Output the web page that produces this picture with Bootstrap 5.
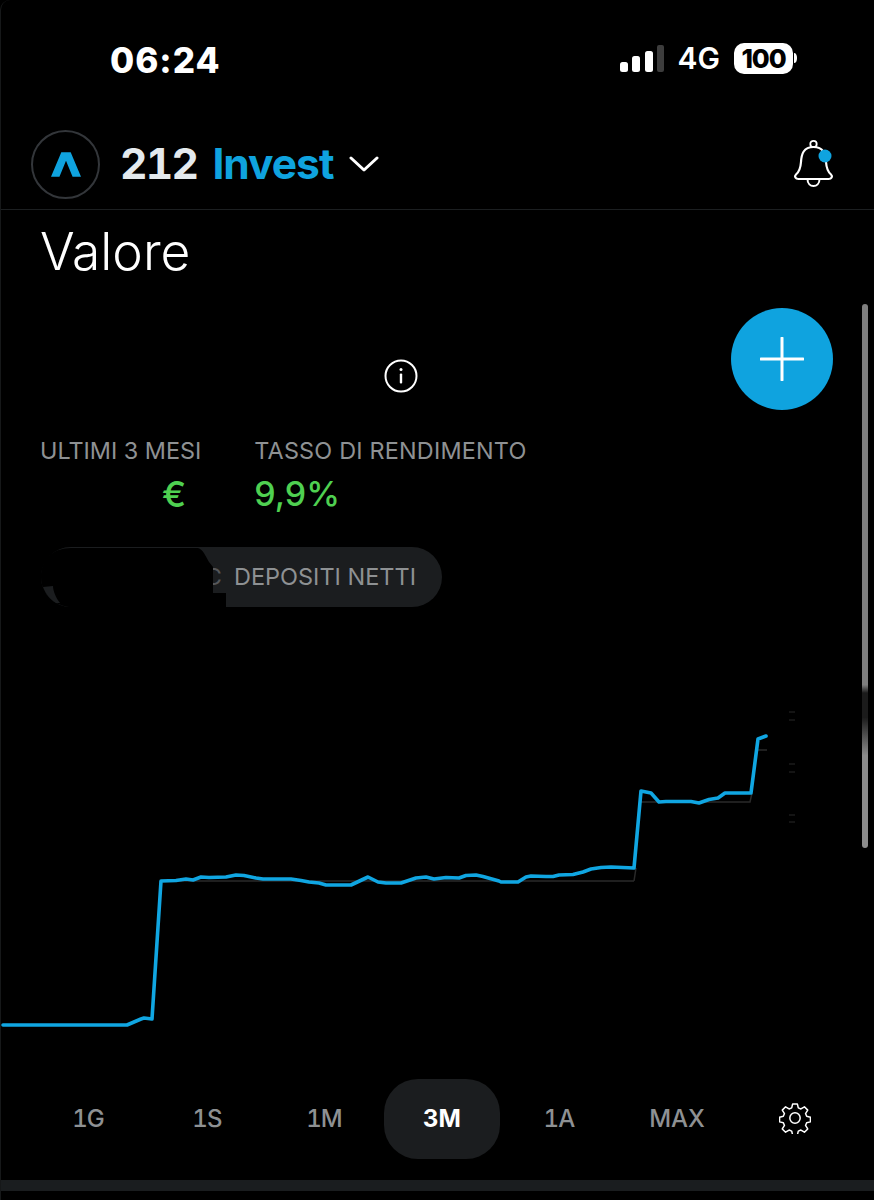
<!DOCTYPE html>
<html lang="it">
<head>
<meta charset="utf-8">
<title>212 Invest</title>
<link href="https://cdn.jsdelivr.net/npm/bootstrap@5.3.0/dist/css/bootstrap.min.css" rel="stylesheet">
<style>
html,body{background:#000;margin:0;}
body{font-family:Inter,"Liberation Sans",sans-serif;color:#fff;}
.screen{width:874px;height:1200px;background:#000;position:relative;overflow:hidden;border-left:1px solid #161819;border-radius:10px 10px 0 0;}
.status-row{height:125px;padding:39px 76px 0 109px;}
.clock{font-size:35px;font-weight:800;line-height:42px;letter-spacing:1px;}
.status-right{gap:15px;margin-top:-2px;}
.net{font-size:30px;font-weight:600;line-height:42px;margin-left:-1px;margin-right:-1px;}
.batt{width:59px;height:31px;border-radius:10px;background:#fff;color:#000;font-size:26px;font-weight:800;line-height:31px;text-align:center;letter-spacing:-1.2px;}
.app-head{height:85px;border-bottom:1px solid #1c1f21;padding:0 38px 6px 30px;}
.logo-ring{width:69px;height:69px;border:2px solid #33363a;border-radius:50%;}
.brand{font-size:42.5px;font-weight:700;line-height:50px;margin-left:20px;}
.brand-num{color:#e4eaee;font-feature-settings:"tnum";letter-spacing:-1.7px;}
.brand-name{color:#0fa3df;letter-spacing:-1px;margin-left:5px;}
.chev{margin-left:16px;}
.val-title{font-size:51.5px;font-weight:300;line-height:60px;margin:11px 0 0 39px;}
.blur-row{height:64px;margin-top:63px;padding:0 40px;}
.info-gap{margin-left:343px;}
.add-btn{width:102px;height:102px;border-radius:50%;background:#0fa3df;position:absolute;left:730px;top:308px;}
.metric-row{margin:0 0 0 39px;gap:53px;padding-top:28px;}
.m-label{font-size:23.4px;line-height:30px;color:#8e9193;white-space:nowrap;}
.m-label-wide{letter-spacing:.2px;}
.m-value{font-size:34px;font-weight:450;line-height:42px;color:#4fd051;margin-top:7px;}
.m-euro{font-size:36px;font-weight:500;padding-right:15px;}
.pill{width:401px;height:60px;background:#1b1d1f;border-radius:30px;margin:32px 0 0 40px;padding-right:26px;position:relative;}
.pill-text{font-size:23.5px;color:#8e9193;white-space:nowrap;}
.pill-ghost{color:#55575a;margin-right:12px;}
.blot{position:absolute;left:0;top:0;}
.chart{display:block;margin-top:53px;}
.ranges{position:absolute;left:0;top:1079px;width:873px;height:80px;}
.rng{position:absolute;top:0;height:80px;font-size:24px;font-weight:500;color:#8e9193;background:transparent;border:0;padding:0;font-feature-settings:"tnum";}
.rng-num{letter-spacing:-.9px;}
.rng-on{background:#1b1d1f;color:#fff;border-radius:34px;font-weight:700;}
.gear{position:absolute;left:778px;top:23px;}
.home-bar{position:absolute;left:0;top:1180px;width:873px;height:11px;background:#1a1d1f;}
.scroll-thumb{position:absolute;left:861px;top:304px;width:6px;height:544px;border-radius:3px;background:linear-gradient(#7f7f7f 0,#7f7f7f 70%,#1b1b1b 71.5%,#1b1b1b 76%,#8c8c8c 83%,#8c8c8c 100%);}
</style>
</head>
<body>
<div class="screen">
  <div class="status-row d-flex justify-content-between align-items-start">
    <div class="clock">06:24</div>
    <div class="status-right d-flex align-items-center">
      <svg width="44" height="27" viewBox="0 0 44 27"><rect x="0" y="17" width="8" height="10" rx="2.500" fill="#fff"/><rect x="12" y="11" width="8" height="16" rx="2.500" fill="#fff"/><rect x="25" y="6" width="8" height="21" rx="2.500" fill="#fff"/><rect x="37" y="0" width="7" height="27" rx="2" fill="#3d3d3d"/></svg>
      <span class="net">4G</span>
      <div class="d-flex align-items-center">
        <div class="batt">100</div>
        <svg width="5" height="12" viewBox="0 0 5 12"><path d="M1 1c2 0 3 2 3 5s-1 5-3 5z" fill="#fff"/></svg>
      </div>
    </div>
  </div>
  <div class="app-head d-flex align-items-center justify-content-between">
    <div class="d-flex align-items-center">
      <div class="logo-ring d-flex align-items-center justify-content-center">
        <svg width="30" height="25" viewBox="0 0 32 26"><path d="M11 0h10l11 26h-9L16 9 9 26H0z" fill="#0fa3df"/></svg>
      </div>
      <div class="brand"><span class="brand-num">212</span> <span class="brand-name">Invest</span></div>
      <svg class="chev" width="30" height="18" viewBox="0 0 30 18"><path d="M2 3l13 12L28 3" fill="none" stroke="#fff" stroke-width="3" stroke-linecap="round" stroke-linejoin="round"/></svg>
    </div>
    <svg width="44" height="50" viewBox="0 0 44 50"><g transform="translate(1.500,0)"><circle cx="20" cy="5" r="3.200" fill="none" stroke="#fff" stroke-width="1.800"/><path d="M20 8C10 8 8 15 7.500 23c-.5 7-2 10-5 12.500C.5 37.500 2 40 5 40h30c3 0 4.500-2.500 2.500-4.500-3-2.500-4.500-5.500-5-12.500C32 15 30 8 20 8z" fill="none" stroke="#fff" stroke-width="2.200"/><path d="M14 40c0 5 3 7 6 7s6-2 6-7" fill="none" stroke="#fff" stroke-width="2"/></g><circle cx="33" cy="17" r="6.500" fill="#0fa3df"/></svg>
  </div>
  <div class="val-title">Valore</div>
  <div class="blur-row d-flex align-items-center">
    <svg class="info-gap" width="34" height="34" viewBox="0 0 34 34"><circle cx="17" cy="17" r="15.500" fill="none" stroke="#fff" stroke-width="2"/><circle cx="17" cy="10.500" r="1.500" fill="#fff"/><rect x="15.800" y="14.500" width="2.400" height="10" rx="1" fill="#fff"/></svg>
  </div>
  <div class="metric-row d-flex">
    <div>
      <div class="m-label">ULTIMI 3 MESI</div>
      <div class="m-value m-euro text-end">€</div>
    </div>
    <div>
      <div class="m-label m-label-wide">TASSO DI RENDIMENTO</div>
      <div class="m-value">9,9%</div>
    </div>
  </div>
  <div class="pill d-flex align-items-center justify-content-end">
    <span class="pill-text pill-ghost">C</span><span class="pill-text">DEPOSITI NETTI</span>
    <svg class="blot" width="190" height="60" viewBox="0 0 190 60"><path d="M0 30C0 12 12 1 30 1H157C162 2 165 10 168 15L172 20V46H185V60H28C12 58 0 46 0 30z" fill="#000"/><path d="M2 40c3 8 8 13 13 16l4 0c-4-5-7-12-7-17z" fill="#1b1d1f"/></svg>
  </div>
  <svg class="chart" width="873" height="450" viewBox="0 0 873 450" aria-label="grafico">
    <g transform="translate(0,-660)" fill="none">
      <path d="M633 881H168M633 881l2-13M640 802h109l2-9M757 750h9" stroke="#2a2a2a" stroke-width="1.500"/>
      <path d="M2 1025H126L140 1019L143 1018L151 1019L160 881L175 880.500L185 879L192 880L200 877L208 877.500L225 877L235 875L243 875.500L255 878L262 879L290 879L300 880.500L308 882L318 883L325 885L350 885L367 877L377 882L385 883L400 883L415 878L425 877L433 879L445 877.500L458 878L465 875.500L475 875L482 876.500L498 881L500 882L517 882L525 877L530 876L545 876.500L552 876.500L558 875L572 874.500L582 872L590 869L600 867.500L610 867L633 868L640 791L650 793L658 802L665 801.500L690 801.500L698 803L708 799.500L717 798L724 793L750 793L757 739L765 736" stroke="#10a6e2" stroke-width="3.600" stroke-linejoin="round" stroke-linecap="round"/>
      <path d="M788 712h6M788 720h6M788 764h6M788 772h6M788 815h6M788 822h6" stroke="#141414" stroke-width="2"/>
    </g>
  </svg>
  <div class="add-btn d-flex align-items-center justify-content-center">
    <svg width="44" height="44" viewBox="0 0 44 44"><path d="M1 22h42M22 1v42" stroke="#fff" stroke-width="3" stroke-linecap="round"/></svg>
  </div>
  <div class="scroll-thumb"></div>
  <div class="ranges">
    <button class="rng rng-num" style="left:71px;width:32px">1G</button>
    <button class="rng rng-num" style="left:191px;width:30px">1S</button>
    <button class="rng rng-num" style="left:305px;width:36px">1M</button>
    <button class="rng rng-on" style="left:383px;width:116px">3M</button>
    <button class="rng rng-num" style="left:542px;width:32px">1A</button>
    <button class="rng" style="left:648px;width:56px">MAX</button>
    <svg class="gear" width="32" height="32" viewBox="0 0 34 34"><path d="M14.500 2h5l1 4.200 2.800 1.200 3.700-2.300 3.500 3.500-2.300 3.700 1.200 2.800 4 1v5l-4 1-1.200 2.800 2.300 3.700-3.500 3.500-3.700-2.300-2.800 1.200-1 4.200h-5l-1-4.200-2.800-1.200-3.700 2.300-3.500-3.500 2.300-3.700-1.200-2.800-4-1v-5l4-1 1.200-2.800-2.300-3.700 3.500-3.500 3.700 2.300 2.800-1.200z" fill="none" stroke="#fff" stroke-width="1.600" stroke-linejoin="round"/><circle cx="17" cy="17" r="5.500" fill="none" stroke="#fff" stroke-width="1.600"/></svg>
  </div>
  <div class="home-bar"></div>
</div>
<script src="https://cdn.jsdelivr.net/npm/bootstrap@5.3.0/dist/js/bootstrap.bundle.min.js"></script>
</body>
</html>
